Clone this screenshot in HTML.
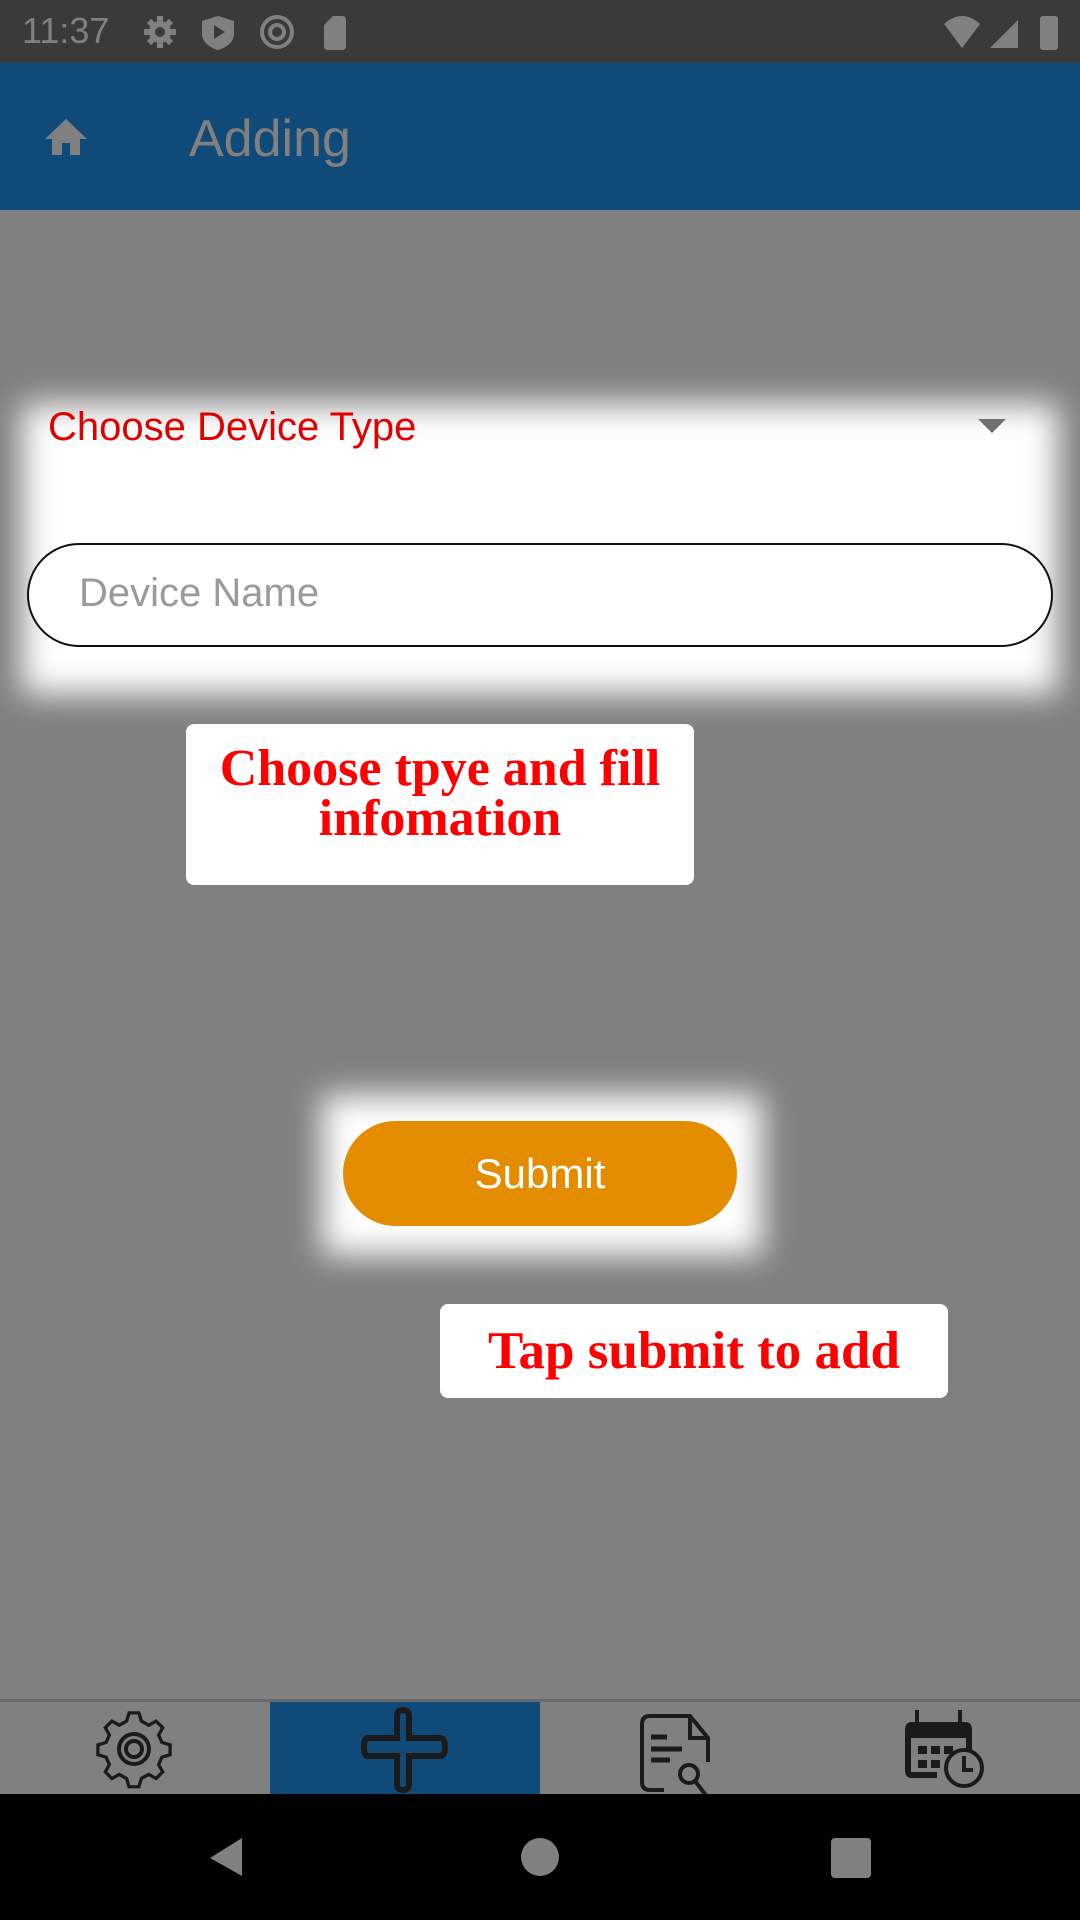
<!DOCTYPE html>
<html><head><meta charset="utf-8"><style>
*{margin:0;padding:0;box-sizing:border-box}
body{width:1080px;height:1920px;background:#808080;position:relative;overflow:hidden;font-family:"Liberation Sans",sans-serif}
.abs{position:absolute}
.status{left:0;top:0;width:1080px;height:63px;background:#3a3a3a}
.appbar{left:0;top:63px;width:1080px;height:147px;background:#104a78}
.spot{background:#fff;filter:blur(16px)}
.tip{background:#fff;border-radius:8px;color:#f00;font-family:"Liberation Serif",serif;font-weight:bold;text-align:center}
</style></head><body>
<div class="abs status"></div>
<div class="abs" style="left:22px;top:10px;color:#808080;font-size:36px;line-height:42px">11:37</div>
<svg class="abs" style="left:140px;top:12px" width="230" height="40" viewBox="0 0 230 40">
<g fill="#808080">
<circle cx="20" cy="20" r="11"/><g stroke="#808080" stroke-width="6"><line x1="20" y1="4" x2="20" y2="36"/><line x1="4" y1="20" x2="36" y2="20"/><line x1="9" y1="9" x2="31" y2="31"/><line x1="31" y1="9" x2="9" y2="31"/></g>
<circle cx="20" cy="20" r="5" fill="#3a3a3a"/>
<path d="M78 4 L94 9 V22 C94 30 86 36 78 38 C70 36 62 30 62 22 V9 Z"/>
<path d="M74 13 L85 20 L74 27 Z" fill="#3a3a3a"/>
<circle cx="137" cy="20" r="15" fill="none" stroke="#808080" stroke-width="4"/>
<circle cx="137" cy="20" r="7" fill="none" stroke="#808080" stroke-width="4"/>
<path d="M193 4 H202 Q206 4 206 8 V34 Q206 38 202 38 H188 Q184 38 184 34 V13 Z"/>
</g></svg>
<svg class="abs" style="left:940px;top:12px" width="130" height="40" viewBox="0 0 130 40">
<g fill="#808080"><path d="M4 12 Q22 -4 40 12 L22 36 Z"/><path d="M50 36 L78 8 V36 Z"/><rect x="100" y="4" width="18" height="34" rx="3"/></g></svg>
<div class="abs appbar"></div>
<svg class="abs" style="left:44px;top:117px" width="44" height="40" viewBox="0 0 44 40"><path d="M22 2 L43 22 H36 V38 H26 V26 H18 V38 H8 V22 H1 Z" fill="#808080"/></svg>
<div class="abs" style="left:189px;top:104px;color:#808080;font-size:52px;line-height:70px">Adding</div>

<div class="abs spot" style="left:22px;top:404px;width:1036px;height:290px"></div>
<div class="abs" style="left:48px;top:400px;color:#e00000;font-size:40px;line-height:54px">Choose Device Type</div>
<svg class="abs" style="left:978px;top:419px" width="28" height="16"><path d="M0 0 H28 L14 14 Z" fill="#707070"/></svg>
<div class="abs" style="left:27px;top:543px;width:1026px;height:104px;border:2.5px solid #111;border-radius:52px;background:#fff"></div>
<div class="abs" style="left:79px;top:566px;color:#9a9a9a;font-size:40px;line-height:54px">Device Name</div>

<div class="abs tip" style="left:186px;top:724px;width:508px;height:161px;font-size:52px;line-height:50px;padding-top:20px">Choose tpye and fill<br>infomation</div>

<div class="abs spot" style="left:322px;top:1095px;width:440px;height:160px"></div>
<div class="abs" style="left:343px;top:1121px;width:394px;height:105px;border-radius:53px;background:#e38c00;color:#fff;font-size:42px;line-height:105px;text-align:center">Submit</div>

<div class="abs tip" style="left:440px;top:1304px;width:508px;height:94px;font-size:53px;line-height:94px">Tap submit to add</div>

<div class="abs" style="left:0;top:1699px;width:1080px;height:3px;background:#6a6a6a"></div>
<div class="abs" style="left:270px;top:1702px;width:270px;height:92px;background:#104a78"></div>
<svg class="abs" style="left:0;top:1702px" width="1080" height="92" viewBox="0 0 1080 92">
<g fill="none" stroke="#1a1a1a" stroke-width="4">
<g transform="translate(134,47) scale(0.82) translate(-134,-49)">
<path d="M128 5 h12 l3 10 l9 5 l9 -5 l8 8 l-5 9 l4 9 l10 3 v12 l-10 3 l-4 9 l5 9 l-8 8 l-9 -5 l-9 5 l-3 10 h-12 l-3 -10 l-9 -5 l-9 5 l-8 -8 l5 -9 l-4 -9 l-10 -3 v-12 l10 -3 l4 -9 l-5 -9 l8 -8 l9 5 l9 -5 z"/>
</g>
<circle cx="134" cy="47" r="15"/><circle cx="134" cy="47" r="8"/>
<path d="M397 14 Q397 8 403 8 Q409 8 409 14 V36 H440 Q445 36 445 45 Q445 54 440 54 H409 V82 Q409 88 403 88 Q397 88 397 82 V54 H368 Q364 54 364 45 Q364 36 368 36 H397 Z" stroke-width="6"/>
<path d="M642 80 V22 Q642 14 650 14 H690 L708 36 V60"/><path d="M690 14 V36 H708"/>
<path d="M642 80 Q642 88 650 88 H664"/>
<line x1="651" y1="35" x2="667" y2="35" stroke-width="5"/>
<line x1="651" y1="47" x2="682" y2="47" stroke-width="5"/>
<line x1="651" y1="58" x2="670" y2="58" stroke-width="5"/>
<circle cx="689" cy="72" r="9"/><line x1="695" y1="79" x2="708" y2="96"/>
</g>
<g fill="#1a1a1a">
<path d="M905 28 Q905 20 912 20 H965 Q972 20 972 28 V50 H966 V36 H911 V70 H937 V76 H912 Q905 76 905 68 Z"/>
<rect x="918" y="44" width="9" height="8"/><rect x="931" y="44" width="9" height="8"/><rect x="944" y="44" width="9" height="8"/>
<rect x="918" y="58" width="9" height="8"/><rect x="931" y="58" width="9" height="8"/>
</g>
<g fill="none" stroke="#1a1a1a" stroke-width="4">
<line x1="917" y1="8" x2="917" y2="24"/><line x1="960" y1="8" x2="960" y2="24"/>
<circle cx="964" cy="66" r="18"/><path d="M964 54 V68 H973"/>
</g></svg>
<div class="abs" style="left:0;top:1794px;width:1080px;height:126px;background:#000"></div>
<svg class="abs" style="left:0;top:1794px" width="1080" height="126"><g fill="#808080">
<path d="M242 44 L242 82 L210 64 Z"/><circle cx="540" cy="63" r="19"/><rect x="831" y="44" width="40" height="40" rx="4"/></g></svg>
</body></html>
